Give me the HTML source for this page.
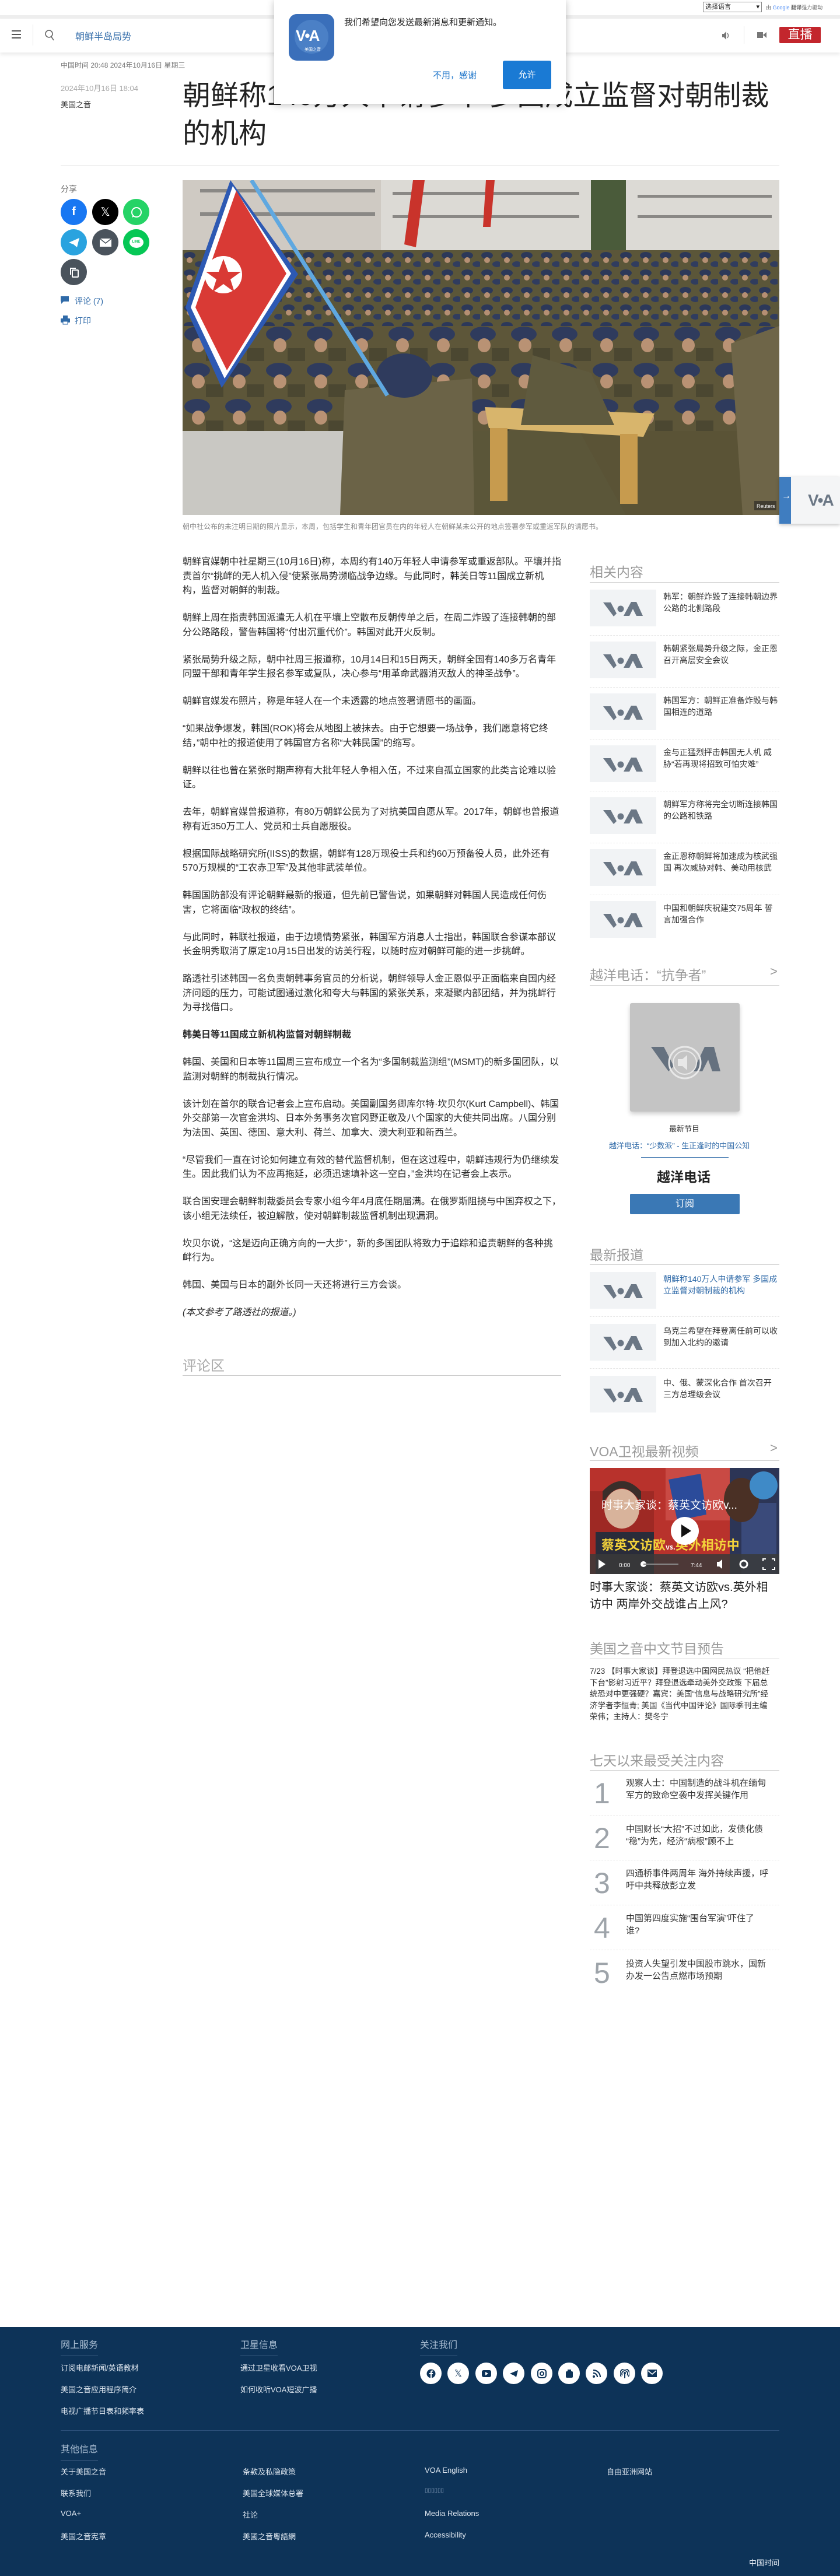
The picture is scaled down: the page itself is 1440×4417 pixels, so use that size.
<!DOCTYPE html>
<html><head><meta charset="utf-8">
<style>
*{margin:0;padding:0;box-sizing:border-box}
html,body{width:1440px;height:4417px;background:#fff;overflow:hidden}
body{position:relative;font-family:"Liberation Sans","Noto Sans CJK SC",sans-serif;color:#222}
.a{position:absolute;white-space:nowrap}
.body p{font-size:16px;line-height:24.5px;color:#2a2a2a;margin-bottom:22.5px;white-space:nowrap}
.sh{position:absolute;left:1011px;width:325px;font-size:23px;color:#9a9a9a;border-bottom:1px solid #ccc;height:0}
.rel{position:absolute;left:1011px;width:325px;height:63px}
.rel .t{position:absolute;left:0;top:0;width:114px;height:63px;background:#f1f3f5}
.rel .x{position:absolute;left:126px;top:3px;font-size:14px;line-height:19.5px;color:#333;white-space:nowrap}
.dot{position:absolute;left:1011px;width:325px;border-top:1px dashed #e6e6e6}
.ic{position:absolute;width:45px;height:45px;border-radius:50%;display:flex;align-items:center;justify-content:center}
.fl{position:absolute;font-size:13px;color:#dfe7f0;white-space:nowrap}
.fh{position:absolute;font-size:16px;color:#a9bdd2;border-bottom:1px solid #3c5c80;padding-bottom:8px}
.fi{position:absolute;top:4051px;width:37px;height:37px;border-radius:50%;background:#fff;display:flex;align-items:center;justify-content:center}
.num{position:absolute;left:1018px;font-size:50px;color:#9ea4aa;line-height:50px}
.mt{position:absolute;left:1073px;font-size:15px;line-height:21px;color:#333;white-space:nowrap}
</style></head><body>

<!-- top bar -->
<div class="a" style="left:0;top:26px;width:1440px;height:6px;background:#eee"></div>
<div class="a" style="left:1205px;top:3px;width:101px;height:18px;border:1px solid #888;font-size:11px;line-height:16px;padding-left:3px;color:#222">选择语言<span style="position:absolute;right:3px">▾</span></div>
<div class="a" style="left:1313px;top:6px;font-size:9px;color:#666">由 <span style="color:#4285f4">Google</span> <b>翻译</b>强力驱动</div>

<!-- nav -->
<div class="a" style="left:0;top:32px;width:1440px;height:58px;background:#fff;box-shadow:0 4px 6px rgba(0,0,0,0.08)"></div>
<div class="a" style="left:20px;top:52px;width:16px;height:2px;background:#555;box-shadow:0 6px 0 #555,0 12px 0 #555"></div>
<div class="a" style="left:56px;top:42px;width:1px;height:36px;background:#e5e5e5"></div>
<svg class="a" style="left:76px;top:50px" width="18" height="20"><circle cx="8" cy="8" r="6" fill="none" stroke="#666" stroke-width="1.6"/><line x1="12" y1="13" x2="16" y2="19" stroke="#666" stroke-width="1.6"/></svg>
<div class="a" style="left:129px;top:49px;font-size:16px;color:#2f6aa8">朝鲜半岛局势</div>
<svg class="a" style="left:1236px;top:52px" width="16" height="18"><path d="M2 6h3l4-4v14l-4-4H2z" fill="#777"/><path d="M11 5q3 4 0 8" stroke="#777" fill="none" stroke-width="1.5"/></svg>
<div class="a" style="left:1275px;top:45px;width:1px;height:30px;background:#e5e5e5"></div>
<svg class="a" style="left:1298px;top:53px" width="16" height="14"><rect x="0" y="2" width="10" height="10" fill="#777"/><path d="M10 7l6-5v10z" fill="#777"/></svg>
<div class="a" style="left:1336px;top:46px;width:71px;height:28px;background:#c3262d;border-radius:2px;color:#fff;font-size:21px;line-height:28px;text-align:center">直播</div>

<!-- dates -->
<div class="a" style="left:104px;top:103px;font-size:12px;color:#777">中国时间 20:48 2024年10月16日 星期三</div>
<div class="a" style="left:104px;top:141px;font-size:13px;color:#aaa">2024年10月16日 18:04</div>
<div class="a" style="left:104px;top:169px;font-size:13px;color:#333">美国之音</div>

<!-- title -->
<div class="a" style="left:313px;top:132px;font-size:48px;line-height:65px;color:#222;white-space:normal;width:1030px">朝鲜称140万人申请参军 多国成立监督对朝制裁<br>的机构</div>
<div class="a" style="left:104px;top:284px;width:1232px;height:1px;background:#ccc"></div>

<!-- popup -->
<div class="a" style="left:470px;top:0;width:500px;height:178px;background:#fff;box-shadow:0 2px 12px rgba(0,0,0,0.25)">
 <div class="a" style="left:25px;top:24px;width:78px;height:80px;background:#3a6fba;border-radius:14px;overflow:hidden">
  <div class="a" style="left:10px;top:10px;width:58px;height:58px;border-radius:50%;background:#4b80c6"></div>
  <div class="a" style="left:12px;top:22px;font-size:26px;font-weight:bold;color:#fff;letter-spacing:-2px">V•A</div>
  <div class="a" style="left:27px;top:56px;font-size:7px;color:#fff">美国之音</div>
 </div>
 <div class="a" style="left:120px;top:27px;font-size:15px;color:#222">我们希望向您发送最新消息和更新通知。</div>
 <div class="a" style="left:272px;top:118px;font-size:15px;color:#1a73c9">不用，感谢</div>
 <div class="a" style="left:392px;top:104px;width:83px;height:49px;background:#1a7ad4;border-radius:3px;color:#fff;font-size:15px;line-height:49px;text-align:center">允许</div>
</div>

<!-- share column -->
<div class="a" style="left:104px;top:314px;font-size:14px;color:#666">分享</div>
<div class="ic" style="left:104px;top:341px;background:#1877f2"><span style="color:#fff;font-weight:bold;font-size:20px">f</span></div>
<div class="ic" style="left:158px;top:341px;background:#000"><span style="color:#fff;font-size:20px">𝕏</span></div>
<div class="ic" style="left:211px;top:341px;background:#25d366"><svg width="22" height="22"><circle cx="11" cy="11" r="8" fill="none" stroke="#fff" stroke-width="2"/><path d="M3 20l2-5 3 3z" fill="#fff"/></svg></div>
<div class="ic" style="left:104px;top:393px;background:#2aa3df"><svg width="22" height="20"><path d="M2 10L20 2 16 18 10 13z" fill="#fff"/></svg></div>
<div class="ic" style="left:158px;top:393px;background:#4a535c"><svg width="22" height="16"><rect x="1" y="1" width="20" height="14" fill="#fff"/><path d="M1 1l10 8 10-8" stroke="#4a535c" fill="none" stroke-width="1.5"/></svg></div>
<div class="ic" style="left:211px;top:393px;background:#06c755"><div style="width:24px;height:19px;background:#fff;border-radius:50%;font-size:6px;color:#06c755;text-align:center;line-height:19px;font-weight:bold">LINE</div></div>
<div class="ic" style="left:104px;top:444px;background:#4a535c"><svg width="20" height="20"><rect x="7" y="6" width="10" height="12" rx="1" fill="none" stroke="#fff" stroke-width="2"/><path d="M4 14V3h9" stroke="#fff" fill="none" stroke-width="2"/></svg></div>
<svg class="a" style="left:104px;top:508px" width="15" height="14"><path d="M0 0h14v9H5l-4 4V9H0z" fill="#2f6aa8"/></svg>
<div class="a" style="left:128px;top:506px;font-size:14px;color:#2f6aa8">评论 (7)</div>
<svg class="a" style="left:104px;top:541px" width="16" height="16"><rect x="4" y="0" width="8" height="5" fill="#2f6aa8"/><rect x="0" y="5" width="16" height="7" rx="1" fill="#2f6aa8"/><rect x="4" y="10" width="8" height="5" fill="#fff" stroke="#2f6aa8"/></svg>
<div class="a" style="left:128px;top:540px;font-size:14px;color:#2f6aa8">打印</div>

<!-- main image -->
<svg class="a" style="left:313px;top:309px" width="1023" height="574" viewBox="0 0 1023 574">
 <defs>
  <pattern id="caps" width="34" height="30" patternUnits="userSpaceOnUse"><rect width="34" height="30" fill="#5b5639"/><ellipse cx="12" cy="9" rx="10" ry="6" fill="#2c3859"/><ellipse cx="12" cy="17" rx="5" ry="5" fill="#b58f73"/><ellipse cx="29" cy="24" rx="8" ry="5" fill="#303c5e"/></pattern>
  <pattern id="bcaps" width="70" height="62" patternUnits="userSpaceOnUse"><rect width="70" height="62" fill="#5d5639"/><ellipse cx="25" cy="16" rx="22" ry="13" fill="#2f3b5d"/><ellipse cx="27" cy="35" rx="11" ry="12" fill="#b99274"/><rect x="40" y="40" width="30" height="22" fill="#4b4731"/></pattern>
 </defs>
 <rect width="1023" height="574" fill="#5b5639"/>
 <rect width="1023" height="150" fill="#dcdad5"/>
 <rect x="0" y="0" width="340" height="150" fill="#cfcac3"/>
 <rect x="700" y="0" width="60" height="130" fill="#4a5b3a"/>
 <g fill="#8a8885"><rect x="30" y="15" width="300" height="6"/><rect x="360" y="20" width="320" height="5"/><rect x="30" y="55" width="300" height="6"/><rect x="360" y="60" width="320" height="5"/><rect x="780" y="25" width="230" height="5"/><rect x="780" y="60" width="230" height="5"/></g>
 <rect x="0" y="120" width="1023" height="140" fill="url(#caps)"/>
 <rect x="0" y="250" width="1023" height="180" fill="url(#bcaps)"/>
 <polygon points="0,430 280,430 330,574 0,574" fill="#c9c8c3"/>
 <polygon points="680,430 1023,430 1023,574 760,574" fill="#5a5336"/>
 <polygon points="518,389 809,400 790,440 525,425" fill="#d8b56c"/>
 <rect x="527" y="425" width="30" height="125" fill="#c79b4e"/>
 <rect x="750" y="435" width="30" height="120" fill="#c79b4e"/>
 <polygon points="278,360 496,340 500,574 270,574" fill="#6b6347"/>
 <ellipse cx="380" cy="335" rx="48" ry="38" fill="#2f3b5d"/>
 <polygon points="600,300 700,330 740,420 580,420" fill="#5f5a3e"/>
 <polygon points="940,280 1023,250 1023,574 960,574" fill="#6e6548"/>
 <polygon points="82,0 198,161 67,356 5,218" fill="#2d59b3"/>
 <polygon points="86,10 186,160 72,340 14,218" fill="#fff"/>
 <polygon points="92,18 178,160 76,326 22,218" fill="#d93a35"/>
 <circle cx="70" cy="162" r="32" fill="#fff"/>
 <polygon points="70,135 78,157 100,157 82,170 89,192 70,178 51,192 58,170 40,157 62,157" fill="#d93a35"/>
 <line x1="118" y1="0" x2="351" y2="369" stroke="#5fa8e0" stroke-width="7"/>
 <polygon points="395,0 415,0 400,115 380,110" fill="#c9332b"/>
 <polygon points="520,0 535,0 528,80 515,80" fill="#c9332b"/>
 <rect x="980" y="550" width="38" height="16" fill="#222" opacity=".6"/>
 <text x="984" y="562" font-size="9" fill="#fff" font-family="Liberation Sans">Reuters</text>
</svg>
<div class="a" style="left:313px;top:894px;font-size:12px;color:#888">朝中社公布的未注明日期的照片显示，本周，包括学生和青年团官员在内的年轻人在朝鲜某未公开的地点签署参军或重返军队的请愿书。</div>

<!-- floating widget -->
<div class="a" style="left:1336px;top:818px;width:104px;height:80px;background:#f4f5f6;box-shadow:0 2px 6px rgba(0,0,0,.25)"></div>
<div class="a" style="left:1336px;top:818px;width:20px;height:80px;background:#3f7dc0"></div>
<div class="a" style="left:1340px;top:842px;color:#fff;font-size:16px">→</div>
<div class="a" style="left:1385px;top:842px;font-size:28px;font-weight:bold;color:#6b7785;letter-spacing:-2px">V•A</div>

<!-- article body -->
<div class="a body" style="left:313px;top:952px">
<p>朝鲜官媒朝中社星期三(10月16日)称，本周约有140万年轻人申请参军或重返部队。平壤并指<br>责首尔“挑衅的无人机入侵”使紧张局势濒临战争边缘。与此同时，韩美日等11国成立新机<br>构，监督对朝鲜的制裁。</p>
<p>朝鲜上周在指责韩国派遣无人机在平壤上空散布反朝传单之后，在周二炸毁了连接韩朝的部<br>分公路路段，警告韩国将“付出沉重代价”。韩国对此开火反制。</p>
<p>紧张局势升级之际，朝中社周三报道称，10月14日和15日两天，朝鲜全国有140多万名青年<br>同盟干部和青年学生报名参军或复队，决心参与“用革命武器消灭敌人的神圣战争”。</p>
<p>朝鲜官媒发布照片，称是年轻人在一个未透露的地点签署请愿书的画面。</p>
<p>“如果战争爆发，韩国(ROK)将会从地图上被抹去。由于它想要一场战争，我们愿意将它终<br>结，”朝中社的报道使用了韩国官方名称“大韩民国”的缩写。</p>
<p>朝鲜以往也曾在紧张时期声称有大批年轻人争相入伍，不过来自孤立国家的此类言论难以验<br>证。</p>
<p>去年，朝鲜官媒曾报道称，有80万朝鲜公民为了对抗美国自愿从军。2017年，朝鲜也曾报道<br>称有近350万工人、党员和士兵自愿服役。</p>
<p>根据国际战略研究所(IISS)的数据，朝鲜有128万现役士兵和约60万预备役人员，此外还有<br>570万规模的“工农赤卫军”及其他非武装单位。</p>
<p>韩国国防部没有评论朝鲜最新的报道，但先前已警告说，如果朝鲜对韩国人民造成任何伤<br>害，它将面临“政权的终结”。</p>
<p>与此同时，韩联社报道，由于边境情势紧张，韩国军方消息人士指出，韩国联合参谋本部议<br>长金明秀取消了原定10月15日出发的访美行程，以随时应对朝鲜可能的进一步挑衅。</p>
<p>路透社引述韩国一名负责朝韩事务官员的分析说，朝鲜领导人金正恩似乎正面临来自国内经<br>济问题的压力，可能试图通过激化和夸大与韩国的紧张关系，来凝聚内部团结，并为挑衅行<br>为寻找借口。</p>
<p><b>韩美日等11国成立新机构监督对朝鲜制裁</b></p>
<p>韩国、美国和日本等11国周三宣布成立一个名为“多国制裁监测组”(MSMT)的新多国团队，以<br>监测对朝鲜的制裁执行情况。</p>
<p>该计划在首尔的联合记者会上宣布启动。美国副国务卿库尔特·坎贝尔(Kurt Campbell)、韩国<br>外交部第一次官金洪均、日本外务事务次官冈野正敬及八个国家的大使共同出席。八国分别<br>为法国、英国、德国、意大利、荷兰、加拿大、澳大利亚和新西兰。</p>
<p>“尽管我们一直在讨论如何建立有效的替代监督机制，但在这过程中，朝鲜违规行为仍继续发<br>生。因此我们认为不应再拖延，必须迅速填补这一空白，”金洪均在记者会上表示。</p>
<p>联合国安理会朝鲜制裁委员会专家小组今年4月底任期届满。在俄罗斯阻挠与中国弃权之下，<br>该小组无法续任，被迫解散，使对朝鲜制裁监督机制出现漏洞。</p>
<p>坎贝尔说，“这是迈向正确方向的一大步”，新的多国团队将致力于追踪和追责朝鲜的各种挑<br>衅行为。</p>
<p>韩国、美国与日本的副外长同一天还将进行三方会谈。</p>
<p><i>(本文参考了路透社的报道。)</i></p>
</div>
<div class="a" style="left:313px;top:2322px;font-size:24px;color:#aaa">评论区</div>
<div class="a" style="left:313px;top:2358px;width:649px;height:1px;background:#ccc"></div>

<!-- sidebar: related -->
<div class="a" style="left:1011px;top:962px;font-size:23px;color:#9a9a9a">相关内容</div>
<div class="a" style="left:1011px;top:998px;width:325px;height:1px;background:#ccc"></div>

<div class="rel" style="top:1011px"><div class="t"><svg width="114" height="63"><polygon points="23,22 36,22 46,41 41,46" fill="#6b7785"/><circle cx="53" cy="33" r="5.5" fill="#6b7785"/><polygon points="58,45 71,21 80,21 91,45 80,45 74,33 68,45" fill="#6b7785"/></svg></div><div class="x">韩军：朝鲜炸毁了连接韩朝边界<br>公路的北侧路段</div></div>
<div class="dot" style="top:1089px"></div>
<div class="rel" style="top:1100px"><div class="t"><svg width="114" height="63"><polygon points="23,22 36,22 46,41 41,46" fill="#6b7785"/><circle cx="53" cy="33" r="5.5" fill="#6b7785"/><polygon points="58,45 71,21 80,21 91,45 80,45 74,33 68,45" fill="#6b7785"/></svg></div><div class="x">韩朝紧张局势升级之际，金正恩<br>召开高层安全会议</div></div>
<div class="dot" style="top:1178px"></div>
<div class="rel" style="top:1189px"><div class="t"><svg width="114" height="63"><polygon points="23,22 36,22 46,41 41,46" fill="#6b7785"/><circle cx="53" cy="33" r="5.5" fill="#6b7785"/><polygon points="58,45 71,21 80,21 91,45 80,45 74,33 68,45" fill="#6b7785"/></svg></div><div class="x">韩国军方：朝鲜正准备炸毁与韩<br>国相连的道路</div></div>
<div class="dot" style="top:1267px"></div>
<div class="rel" style="top:1278px"><div class="t"><svg width="114" height="63"><polygon points="23,22 36,22 46,41 41,46" fill="#6b7785"/><circle cx="53" cy="33" r="5.5" fill="#6b7785"/><polygon points="58,45 71,21 80,21 91,45 80,45 74,33 68,45" fill="#6b7785"/></svg></div><div class="x">金与正猛烈抨击韩国无人机 威<br>胁“若再现将招致可怕灾难”</div></div>
<div class="dot" style="top:1356px"></div>
<div class="rel" style="top:1367px"><div class="t"><svg width="114" height="63"><polygon points="23,22 36,22 46,41 41,46" fill="#6b7785"/><circle cx="53" cy="33" r="5.5" fill="#6b7785"/><polygon points="58,45 71,21 80,21 91,45 80,45 74,33 68,45" fill="#6b7785"/></svg></div><div class="x">朝鲜军方称将完全切断连接韩国<br>的公路和铁路</div></div>
<div class="dot" style="top:1445px"></div>
<div class="rel" style="top:1456px"><div class="t"><svg width="114" height="63"><polygon points="23,22 36,22 46,41 41,46" fill="#6b7785"/><circle cx="53" cy="33" r="5.5" fill="#6b7785"/><polygon points="58,45 71,21 80,21 91,45 80,45 74,33 68,45" fill="#6b7785"/></svg></div><div class="x">金正恩称朝鲜将加速成为核武强<br>国 再次威胁对韩、美动用核武</div></div>
<div class="dot" style="top:1534px"></div>
<div class="rel" style="top:1545px"><div class="t"><svg width="114" height="63"><polygon points="23,22 36,22 46,41 41,46" fill="#6b7785"/><circle cx="53" cy="33" r="5.5" fill="#6b7785"/><polygon points="58,45 71,21 80,21 91,45 80,45 74,33 68,45" fill="#6b7785"/></svg></div><div class="x">中国和朝鲜庆祝建交75周年 誓<br>言加强合作</div></div>

<!-- sidebar: 越洋电话 -->
<div class="a" style="left:1011px;top:1653px;font-size:23px;color:#9a9a9a">越洋电话：“抗争者”</div>
<div class="a" style="left:1320px;top:1653px;font-size:22px;color:#999">&gt;</div>
<div class="a" style="left:1011px;top:1689px;width:325px;height:1px;background:#ccc"></div>
<div class="a" style="left:1080px;top:1720px;width:188px;height:186px;background:#c4c4c4;border-radius:3px;box-shadow:0 4px 8px rgba(0,0,0,.2)">
 <svg width="188" height="186"><polygon points="36,75 58,75 75,108 66,117" fill="#65717f"/><polygon points="108,117 128,75 144,75 155,117 141,117 134,97 124,117" fill="#65717f"/><circle cx="94" cy="102" r="27" fill="none" stroke="#e8e8e8" stroke-width="3"/><circle cx="94" cy="102" r="20" fill="none" stroke="#e8e8e8" stroke-width="2"/><rect x="82" y="96" width="8" height="12" fill="#e8e8e8"/><path d="M90 96l8-7v26l-8-7z" fill="#e8e8e8"/></svg>
</div>
<div class="a" style="left:1147px;top:1925px;font-size:13px;color:#333">最新节目</div>
<div class="a" style="left:1044px;top:1954px;font-size:13px;color:#2f6aa8">越洋电话：“少数派” - 生正逢时的中国公知</div>
<div class="a" style="left:1099px;top:1984px;width:150px;height:1px;background:#2f6aa8"></div>
<div class="a" style="left:1126px;top:1999px;font-size:23px;color:#222;font-weight:bold">越洋电话</div>
<div class="a" style="left:1080px;top:2047px;width:188px;height:35px;background:#3a78b5;border-radius:2px;color:#fff;font-size:16px;line-height:35px;text-align:center">订阅</div>

<!-- latest -->
<div class="a" style="left:1011px;top:2133px;font-size:23px;color:#9a9a9a">最新报道</div>
<div class="a" style="left:1011px;top:2168px;width:325px;height:1px;background:#ccc"></div>
<div class="rel" style="top:2181px"><div class="t"><svg width="114" height="63"><polygon points="23,22 36,22 46,41 41,46" fill="#6b7785"/><circle cx="53" cy="33" r="5.5" fill="#6b7785"/><polygon points="58,45 71,21 80,21 91,45 80,45 74,33 68,45" fill="#6b7785"/></svg></div><div class="x" style="color:#2f6aa8">朝鲜称140万人申请参军 多国成<br>立监督对朝制裁的机构</div></div>
<div class="dot" style="top:2257px"></div>
<div class="rel" style="top:2270px"><div class="t"><svg width="114" height="63"><polygon points="23,22 36,22 46,41 41,46" fill="#6b7785"/><circle cx="53" cy="33" r="5.5" fill="#6b7785"/><polygon points="58,45 71,21 80,21 91,45 80,45 74,33 68,45" fill="#6b7785"/></svg></div><div class="x">乌克兰希望在拜登离任前可以收<br>到加入北约的邀请</div></div>
<div class="dot" style="top:2346px"></div>
<div class="rel" style="top:2359px"><div class="t"><svg width="114" height="63"><polygon points="23,22 36,22 46,41 41,46" fill="#6b7785"/><circle cx="53" cy="33" r="5.5" fill="#6b7785"/><polygon points="58,45 71,21 80,21 91,45 80,45 74,33 68,45" fill="#6b7785"/></svg></div><div class="x">中、俄、蒙深化合作 首次召开<br>三方总理级会议</div></div>

<!-- video -->
<div class="a" style="left:1011px;top:2470px;font-size:23px;color:#9a9a9a">VOA卫视最新视频</div>
<div class="a" style="left:1320px;top:2470px;font-size:22px;color:#999">&gt;</div>
<div class="a" style="left:1011px;top:2504px;width:325px;height:1px;background:#ccc"></div>
<svg class="a" style="left:1011px;top:2517px" width="325" height="182" viewBox="0 0 325 182">
 <rect width="325" height="182" fill="#b8322c"/>
 <rect x="130" y="0" width="110" height="90" fill="#c94a44"/>
 <polygon points="135,20 190,10 200,80 150,90" fill="#2b4b9a"/>
 <rect x="240" y="0" width="85" height="182" fill="#2c3556"/>
 <rect x="260" y="60" width="60" height="122" fill="#3a4a7a"/>
 <ellipse cx="260" cy="55" rx="30" ry="38" fill="#4a3025"/>
 <rect x="0" y="40" width="110" height="142" fill="#9e2924"/>
 <ellipse cx="55" cy="70" rx="30" ry="34" fill="#d8b39b"/>
 <path d="M22 60q33-50 66 0v-20q-33-35-66 0z" fill="#3a2e2a"/>
 <rect x="10" y="110" width="100" height="72" fill="#2a2c3a"/>
 <circle cx="298" cy="30" r="24" fill="#3f8ac7"/>
 <text x="20" y="70" font-size="19" fill="#fff" font-family="Liberation Sans,Noto Sans CJK SC,sans-serif">时事大家谈：蔡英文访欧v...</text>
 <text x="20" y="140" font-size="22" font-weight="bold" fill="#f3d23a" font-family="Noto Sans CJK SC,sans-serif">蔡英文访欧<tspan font-size="12" fill="#fff">vs.</tspan>英外相访中</text>
 <rect x="0" y="148" width="325" height="34" fill="#3a3a3a" opacity=".85"/>
 <circle cx="163" cy="108" r="24" fill="#fff"/>
 <path d="M157 97l17 11-17 11z" fill="#111"/>
 <path d="M15 157l12 8-12 8z" fill="#fff"/>
 <text x="50" y="170" font-size="10" fill="#fff" font-family="Liberation Sans">0:00</text>
 <circle cx="92" cy="165" r="5" fill="#fff"/><line x1="92" y1="165" x2="152" y2="165" stroke="#888" stroke-width="2"/>
 <text x="173" y="170" font-size="10" fill="#fff" font-family="Liberation Sans">7:44</text>
 <path d="M218 161h4l5-4v16l-5-4h-4z" fill="#fff"/>
 <circle cx="264" cy="165" r="6" fill="none" stroke="#fff" stroke-width="3"/>
 <path d="M297 160v-4h5M312 156h5v4M317 170v4h-5M302 174h-5v-4" stroke="#fff" fill="none" stroke-width="2"/>
</svg>
<div class="a" style="left:1011px;top:2708px;font-size:20px;line-height:29px;color:#222">时事大家谈：蔡英文访欧vs.英外相<br>访中 两岸外交战谁占上风?</div>

<!-- schedule -->
<div class="a" style="left:1011px;top:2808px;font-size:23px;color:#9a9a9a">美国之音中文节目预告</div>
<div class="a" style="left:1011px;top:2844px;width:325px;height:1px;background:#ccc"></div>
<div class="a" style="left:1011px;top:2856px;font-size:13.5px;line-height:19.5px;color:#333">7/23 【时事大家谈】拜登退选中国网民热议 “把他赶<br>下台”影射习近平？拜登退选牵动美外交政策 下届总<br>统恐对中更强硬？嘉宾：美国“信息与战略研究所”经<br>济学者李恒青; 美国《当代中国评论》国际季刊主编<br>荣伟；主持人：樊冬宁</div>

<!-- most viewed -->
<div class="a" style="left:1011px;top:3000px;font-size:23px;color:#9a9a9a">七天以来最受关注内容</div>
<div class="a" style="left:1011px;top:3035px;width:325px;height:1px;background:#ccc"></div>
<div class="num" style="top:3050px">1</div><div class="mt" style="top:3047px">观察人士：中国制造的战斗机在缅甸<br>军方的致命空袭中发挥关键作用</div>
<div class="dot" style="top:3113px"></div>
<div class="num" style="top:3127px">2</div><div class="mt" style="top:3126px">中国财长“大招”不过如此，发债化债<br>“稳”为先，经济“病根”顾不上</div>
<div class="dot" style="top:3189px"></div>
<div class="num" style="top:3204px">3</div><div class="mt" style="top:3202px">四通桥事件两周年 海外持续声援，呼<br>吁中共释放彭立发</div>
<div class="dot" style="top:3266px"></div>
<div class="num" style="top:3281px">4</div><div class="mt" style="top:3279px">中国第四度实施“围台军演”吓住了<br>谁?</div>
<div class="dot" style="top:3343px"></div>
<div class="num" style="top:3358px">5</div><div class="mt" style="top:3357px">投资人失望引发中国股市跳水，国新<br>办发一公告点燃市场预期</div>

<!-- footer -->
<div class="a" style="left:0;top:3990px;width:1440px;height:427px;background:#0d3358"></div>
<div class="fh" style="left:104px;top:4007px">网上服务</div>
<div class="fh" style="left:412px;top:4007px">卫星信息</div>
<div class="fh" style="left:720px;top:4007px">关注我们</div>
<div class="fl" style="left:104px;top:4050px">订阅电邮新闻/英语教材</div>
<div class="fl" style="left:104px;top:4087px">美国之音应用程序简介</div>
<div class="fl" style="left:104px;top:4124px">电视广播节目表和频率表</div>
<div class="fl" style="left:412px;top:4050px">通过卫星收看VOA卫视</div>
<div class="fl" style="left:412px;top:4087px">如何收听VOA短波广播</div>
<div class="fi" style="left:720px"><svg width="16" height="16"><circle cx="8" cy="8" r="7.5" fill="#0d3358"/><path d="M9 16V9h2l.4-2H9V5.5c0-.6.2-1 1-1h1.4V2.7C11 2.6 10.4 2.5 9.7 2.5 8.2 2.5 7 3.4 7 5.1V7H5v2h2v7z" fill="#fff"/></svg></div>
<div class="fi" style="left:767px"><span style="color:#0d3358;font-size:16px">𝕏</span></div>
<div class="fi" style="left:815px"><svg width="16" height="12"><rect width="16" height="12" rx="3" fill="#0d3358"/><path d="M6 3l5 3-5 3z" fill="#fff"/></svg></div>
<div class="fi" style="left:862px"><svg width="16" height="14"><path d="M1 7L15 1 12 13 8 10z" fill="#0d3358"/></svg></div>
<div class="fi" style="left:910px"><svg width="16" height="16"><rect x="1" y="1" width="14" height="14" rx="4" fill="none" stroke="#0d3358" stroke-width="2"/><circle cx="8" cy="8" r="3" fill="none" stroke="#0d3358" stroke-width="2"/></svg></div>
<div class="fi" style="left:957px"><svg width="14" height="16"><rect x="1" y="4" width="12" height="11" rx="2" fill="#0d3358"/><rect x="4" y="1" width="6" height="4" fill="#0d3358"/></svg></div>
<div class="fi" style="left:1004px"><svg width="14" height="14"><circle cx="2" cy="12" r="2" fill="#0d3358"/><path d="M1 6a7 7 0 0 1 7 7M1 1a12 12 0 0 1 12 12" stroke="#0d3358" fill="none" stroke-width="2.2"/></svg></div>
<div class="fi" style="left:1052px"><svg width="16" height="16"><circle cx="8" cy="7" r="2" fill="#0d3358"/><path d="M4 11a5 5 0 1 1 8 0M2 13a8 8 0 1 1 12 0" stroke="#0d3358" fill="none" stroke-width="1.8"/><rect x="7" y="9" width="2" height="7" fill="#0d3358"/></svg></div>
<div class="fi" style="left:1099px"><svg width="16" height="13"><rect width="16" height="13" fill="#0d3358"/><path d="M1 2l7 6 7-6" stroke="#fff" fill="none" stroke-width="1.6"/></svg></div>
<div class="a" style="left:104px;top:4167px;width:1232px;height:1px;background:#2a4e78"></div>
<div class="fh" style="left:104px;top:4186px">其他信息</div>
<div class="fl" style="left:104px;top:4228px">关于美国之音</div>
<div class="fl" style="left:104px;top:4265px">联系我们</div>
<div class="fl" style="left:104px;top:4302px">VOA+</div>
<div class="fl" style="left:104px;top:4339px">美国之音宪章</div>
<div class="fl" style="left:416px;top:4228px">条款及私隐政策</div>
<div class="fl" style="left:416px;top:4265px">美国全球媒体总署</div>
<div class="fl" style="left:416px;top:4302px">社论</div>
<div class="fl" style="left:416px;top:4339px">美國之音粵語網</div>
<div class="fl" style="left:728px;top:4228px">VOA English</div>
<div class="fl" style="left:728px;top:4265px;color:#7f97b3;font-size:10px">▯▯▯▯▯▯</div>
<div class="fl" style="left:728px;top:4302px">Media Relations</div>
<div class="fl" style="left:728px;top:4339px">Accessibility</div>
<div class="fl" style="left:1040px;top:4228px">自由亚洲网站</div>
<div class="fl" style="left:1284px;top:4384px">中国时间</div>
</body></html>
